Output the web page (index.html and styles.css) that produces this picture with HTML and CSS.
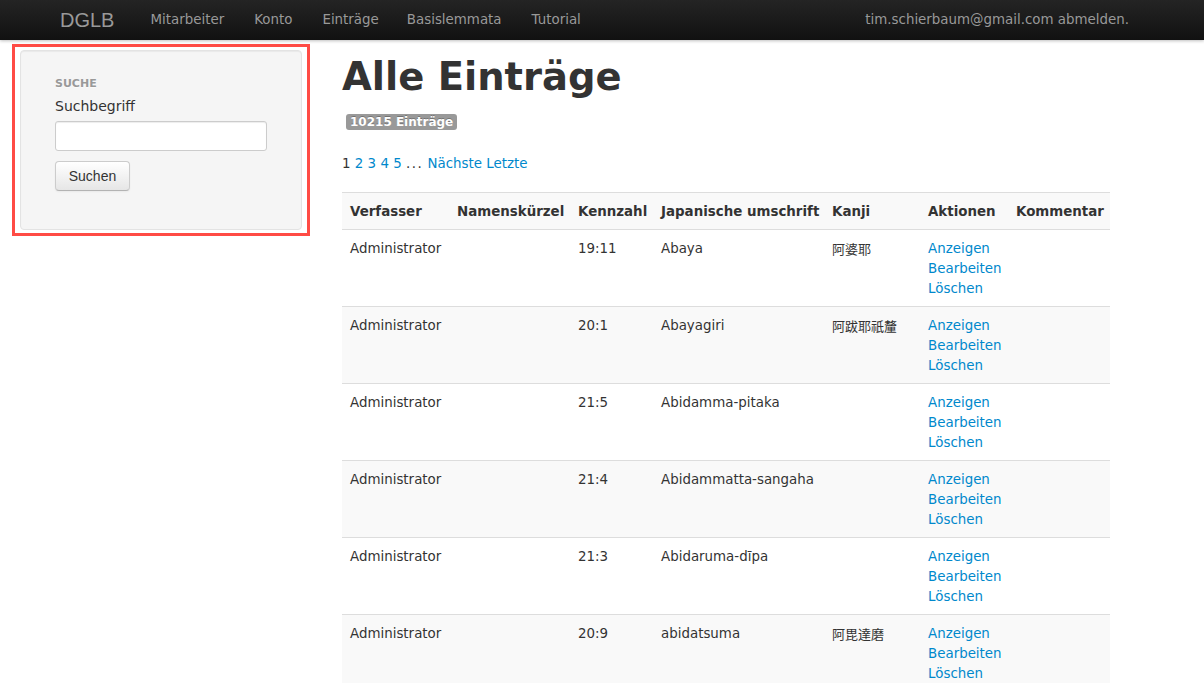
FILE: index.html
```html
<!DOCTYPE html>
<html lang="de">
<head>
<meta charset="utf-8">
<title>DGLB – Alle Einträge</title>
<link rel="stylesheet" href="styles.css">
</head>
<body>
<header class="navbar">
  <a class="brand" href="#">DGLB</a>
  <nav class="nav">
    <a href="#">Mitarbeiter</a>
    <a href="#">Konto</a>
    <a href="#">Einträge</a>
    <a href="#">Basislemmata</a>
    <a href="#">Tutorial</a>
  </nav>
  <div class="user">tim.schierbaum@gmail.com <a href="#">abmelden.</a></div>
</header>

<div class="page">
  <aside class="sidebar">
    <div class="highlight">
      <form class="well">
        <div class="nav-header">Suche</div>
        <label class="field-label" for="q">Suchbegriff</label>
        <input class="field" id="q" type="text">
        <button class="btn" type="button">Suchen</button>
      </form>
    </div>
  </aside>

  <main class="content">
    <h1 class="title">Alle Einträge</h1>
    <div class="count"><span class="badge">10215 Einträge</span></div>
    <p class="pagination">1 <a href="#">2</a> <a href="#">3</a> <a href="#">4</a> <a href="#">5</a> <span class="gap">...</span> <a href="#">Nächste</a> <a href="#">Letzte</a></p>

    <table class="entries">
      <colgroup>
        <col class="c1"><col class="c2"><col class="c3"><col class="c4"><col class="c5"><col class="c6"><col class="c7">
      </colgroup>
      <tbody>
        <tr class="head">
          <th>Verfasser</th><th>Namenskürzel</th><th>Kennzahl</th><th>Japanische umschrift</th><th>Kanji</th><th>Aktionen</th><th>Kommentar</th>
        </tr>
        <tr>
          <td>Administrator</td><td></td><td>19:11</td><td>Abaya</td><td class="kanji">阿婆耶</td>
          <td class="actions"><a href="#">Anzeigen</a><a href="#">Bearbeiten</a><a href="#">Löschen</a></td><td></td>
        </tr>
        <tr>
          <td>Administrator</td><td></td><td>20:1</td><td>Abayagiri</td><td class="kanji">阿跋耶祇釐</td>
          <td class="actions"><a href="#">Anzeigen</a><a href="#">Bearbeiten</a><a href="#">Löschen</a></td><td></td>
        </tr>
        <tr>
          <td>Administrator</td><td></td><td>21:5</td><td>Abidamma-pitaka</td><td class="kanji"></td>
          <td class="actions"><a href="#">Anzeigen</a><a href="#">Bearbeiten</a><a href="#">Löschen</a></td><td></td>
        </tr>
        <tr>
          <td>Administrator</td><td></td><td>21:4</td><td>Abidammatta-sangaha</td><td class="kanji"></td>
          <td class="actions"><a href="#">Anzeigen</a><a href="#">Bearbeiten</a><a href="#">Löschen</a></td><td></td>
        </tr>
        <tr>
          <td>Administrator</td><td></td><td>21:3</td><td>Abidaruma-dīpa</td><td class="kanji"></td>
          <td class="actions"><a href="#">Anzeigen</a><a href="#">Bearbeiten</a><a href="#">Löschen</a></td><td></td>
        </tr>
        <tr>
          <td>Administrator</td><td></td><td>20:9</td><td>abidatsuma</td><td class="kanji">阿毘達磨</td>
          <td class="actions"><a href="#">Anzeigen</a><a href="#">Bearbeiten</a><a href="#">Löschen</a></td><td></td>
        </tr>
      </tbody>
    </table>
  </main>
</div>
</body>
</html>
```

FILE: styles.css
```css
html, body {
  margin: 0;
  padding: 0;
}
body {
  font-family: "DejaVu Sans", Verdana, sans-serif;
  font-size: 13.4px;
  line-height: 20px;
  color: #333;
  background: #fff;
}
a {
  color: #0088cc;
  text-decoration: none;
}

/* Navbar */
.navbar {
  height: 40px;
  display: flex;
  align-items: center;
  padding: 0 75px 0 60px;
  background: linear-gradient(to bottom, #242424, #111);
  box-shadow: 0 1px 3px rgba(0,0,0,0.25);
  position: relative;
  z-index: 1;
}
.brand {
  font-family: "Liberation Sans", Arial, sans-serif;
  font-size: 20px;
  color: #999;
  margin-right: 21px;
  line-height: 40px;
}
.nav {
  display: flex;
}
.nav a {
  color: #999;
  padding: 0 15px;
  line-height: 40px;
}
.nav a:nth-child(4) {
  margin-left: -2px;
}
.user {
  margin-left: auto;
  color: #999;
}
.user a {
  color: #999;
}

/* Layout */
.page {
  display: flex;
  align-items: flex-start;
}
.sidebar {
  margin: 4px 0 0 12px;
  width: 298px;
  flex: none;
}
.highlight {
  border: 3px solid #ff4b45;
  padding: 3px 5px;
}
.well {
  box-sizing: border-box;
  height: 180px;
  background: #f5f5f5;
  border: 1px solid #e3e3e3;
  border-radius: 4px;
  box-shadow: inset 0 1px 1px rgba(0,0,0,0.05);
  padding: 23px 34px 0;
  display: flex;
  flex-direction: column;
  align-items: flex-start;
}
.nav-header {
  font-size: 11px;
  font-weight: bold;
  line-height: 20px;
  color: #999;
  text-transform: uppercase;
  text-shadow: 0 1px 0 rgba(255,255,255,0.5);
}
.field-label {
  font-size: 14px;
  line-height: 20px;
  margin-top: 2px;
  color: #333;
}
.field {
  box-sizing: border-box;
  width: 212px;
  height: 30px;
  margin-top: 5px;
  border: 1px solid #ccc;
  border-radius: 3px;
  background: #fff;
  box-shadow: inset 0 1px 1px rgba(0,0,0,0.075);
}
.btn {
  box-sizing: border-box;
  margin-top: 10px;
  width: 75px;
  height: 30px;
  font-family: "Liberation Sans", Arial, sans-serif;
  font-size: 14px;
  color: #333;
  background: linear-gradient(to bottom, #fff, #e6e6e6);
  border: 1px solid #ccc;
  border-bottom-color: #b3b3b3;
  border-radius: 4px;
  box-shadow: inset 0 1px 0 rgba(255,255,255,0.2), 0 1px 2px rgba(0,0,0,0.05);
  padding: 0;
}

/* Main */
.content {
  margin-left: 32px;
  padding-top: 17px;
  width: 768px;
}
.title {
  margin: 0 0 17px;
  font-size: 38.5px;
  line-height: 40px;
  font-weight: bold;
  color: #333;
}
.count {
  height: 16px;
  padding-left: 4px;
}
.badge {
  display: inline-block;
  vertical-align: top;
  background: #999;
  color: #fff;
  font-size: 12px;
  font-weight: bold;
  line-height: 16px;
  padding: 0 4px;
  border-radius: 3px;
  text-shadow: 0 -1px 0 rgba(0,0,0,0.25);
}
.pagination {
  margin: 24px 0 18px;
  line-height: 20px;
}
.gap {
  letter-spacing: 1.5px;
}

/* Table */
.entries {
  width: 768px;
  border-collapse: collapse;
  table-layout: fixed;
}
.c1 { width: 107px; }
.c2 { width: 121px; }
.c3 { width: 83px; }
.c4 { width: 171px; }
.c5 { width: 96px; }
.c6 { width: 88px; }
.c7 { width: 102px; }
.entries th,
.entries td {
  padding: 9px 8px 7px;
  text-align: left;
  vertical-align: top;
  line-height: 20px;
  border-top: 1px solid #ddd;
  white-space: nowrap;
}
.entries th {
  font-weight: bold;
}
.entries tr:nth-child(odd) th,
.entries tr:nth-child(odd) td {
  background: #f9f9f9;
}
.kanji {
  font-family: "Noto Sans CJK JP", "DejaVu Sans", sans-serif;
  font-size: 13px;
}
.actions a {
  display: block;
}
```
